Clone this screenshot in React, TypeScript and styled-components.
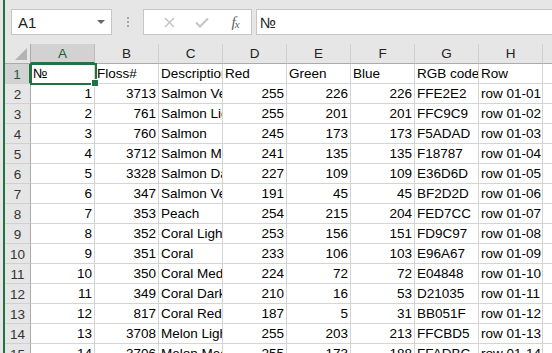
import React from 'react';
import styled, { createGlobalStyle } from 'styled-components';

const GlobalStyle = createGlobalStyle`
    html, body {
        margin: 0;
        padding: 0;
        width: 552px;
        height: 353px;
        overflow: hidden;
        background: #e6e6e6;
    }
    * {
        box-sizing: border-box;
    }
`;

const XL_GREEN = '#217346';

const Page = styled.div`
    width: 552px;
    height: 353px;
    padding-left: 3px;
    background: #e6e6e6;
    overflow: hidden;
`;

const Window = styled.div`
    height: 100%;
    border-left: 2px solid ${XL_GREEN};
    display: flex;
    flex-direction: column;
    background: #e6e6e6;
`;

const FormulaBar = styled.div`
    height: 44px;
    flex: none;
    display: flex;
    align-items: flex-start;
    padding: 9px 0 0 6px;
    font-family: 'Liberation Sans', Arial, sans-serif;
`;

const NameBox = styled.div`
    width: 101px;
    height: 26px;
    background: #fff;
    border: 1px solid #c6c6c6;
    display: flex;
    align-items: center;
    justify-content: space-between;
    padding: 0 6px 0 6px;
    font-size: 15px;
    color: #222;
`;

const DropArrow = styled.span`
    width: 0;
    height: 0;
    border-left: 4px solid transparent;
    border-right: 4px solid transparent;
    border-top: 4px solid #666;
`;

const Dots = styled.div`
    width: 31px;
    height: 26px;
    display: flex;
    flex-direction: column;
    align-items: center;
    justify-content: center;
    gap: 2px;
    span {
        width: 2px;
        height: 2px;
        background: #a6a6a6;
    }
`;

const FuncButtons = styled.div`
    width: 109px;
    height: 26px;
    background: #fff;
    border: 1px solid #c6c6c6;
    display: flex;
    align-items: center;
    padding-left: 10px;
`;

const FuncButton = styled.div<{ $w: number }>`
    width: ${p => p.$w}px;
    height: 24px;
    display: flex;
    align-items: center;
    justify-content: center;
`;

const FxLabel = styled.span`
    font-family: 'Liberation Serif', 'Times New Roman', serif;
    font-style: italic;
    font-size: 15px;
    color: #5b5b5b;
    letter-spacing: -1px;
    sub {
        font-size: 11px;
        vertical-align: -1px;
    }
`;

const FormulaInput = styled.div`
    flex: 1;
    height: 26px;
    margin-left: 4px;
    background: #fff;
    border: 1px solid #c6c6c6;
    border-right: none;
    display: flex;
    align-items: center;
    padding-left: 3px;
    font-size: 15px;
    color: #222;
`;

const SheetWrap = styled.div`
    position: relative;
    flex: 1;
    overflow: hidden;
    background: #fff;
`;

const Sheet = styled.div`
    display: grid;
    grid-template-columns: 26px repeat(9, 64px);
    grid-auto-rows: 20px;
    font-family: 'Liberation Sans', Arial, sans-serif;
    font-size: 13.5px;
    color: #000;
`;

const Corner = styled.div`
    position: relative;
    background: #e6e6e6;
    border-right: 1px solid #ababab;
    border-bottom: 1px solid #ababab;
    &::after {
        content: '';
        position: absolute;
        right: 3px;
        bottom: 3px;
        width: 0;
        height: 0;
        border-left: 12px solid transparent;
        border-bottom: 12px solid #b4b4b4;
    }
`;

const ColHead = styled.div<{ $active?: boolean }>`
    background: ${p => (p.$active ? '#d2d2d2' : '#e6e6e6')};
    border-right: 1px solid ${p => (p.$active ? '#bcbcbc' : '#d0d0d0')};
    border-bottom: ${p => (p.$active ? `2px solid ${XL_GREEN}` : '1px solid #ababab')};
    display: flex;
    align-items: center;
    justify-content: center;
    padding-top: ${p => (p.$active ? '1px' : '0')};
    color: ${p => (p.$active ? '#1d5c38' : '#222')};
`;

const RowHead = styled.div<{ $active?: boolean }>`
    background: ${p => (p.$active ? '#d2d2d2' : '#e6e6e6')};
    border-right: ${p => (p.$active ? `2px solid ${XL_GREEN}` : '1px solid #ababab')};
    border-bottom: 1px solid #d0d0d0;
    display: flex;
    align-items: center;
    justify-content: center;
    padding-top: 1px;
    color: ${p => (p.$active ? '#1d5c38' : '#333')};
`;

const Cell = styled.div<{ $num?: boolean }>`
    border-right: 1px solid #d4d4d4;
    border-bottom: 1px solid #d4d4d4;
    display: flex;
    align-items: flex-end;
    justify-content: ${p => (p.$num ? 'flex-end' : 'flex-start')};
    padding: 0 2px 1px 2px;
    white-space: nowrap;
    overflow: hidden;
    line-height: 16px;
`;

const Selection = styled.div`
    position: absolute;
    left: 25px;
    top: 19px;
    width: 67px;
    height: 22px;
    border: 2px solid ${XL_GREEN};
    pointer-events: none;
    &::after {
        content: '';
        position: absolute;
        right: -4px;
        bottom: -4px;
        width: 6px;
        height: 6px;
        background: ${XL_GREEN};
        border: 1px solid #fff;
    }
`;

const columns = ['A', 'B', 'C', 'D', 'E', 'F', 'G', 'H', 'I'];

// numeric columns are right aligned like Excel does
const numericCols = [true, true, false, true, true, true, false, false];

const header = ['№', 'Floss#', 'Description', 'Red', 'Green', 'Blue', 'RGB code', 'Row'];

const rows: (string | number)[][] = [
    [1, 3713, 'Salmon Very Light', 255, 226, 226, 'FFE2E2', 'row 01-01'],
    [2, 761, 'Salmon Light', 255, 201, 201, 'FFC9C9', 'row 01-02'],
    [3, 760, 'Salmon', 245, 173, 173, 'F5ADAD', 'row 01-03'],
    [4, 3712, 'Salmon Medium', 241, 135, 135, 'F18787', 'row 01-04'],
    [5, 3328, 'Salmon Dark', 227, 109, 109, 'E36D6D', 'row 01-05'],
    [6, 347, 'Salmon Very Dark', 191, 45, 45, 'BF2D2D', 'row 01-06'],
    [7, 353, 'Peach', 254, 215, 204, 'FED7CC', 'row 01-07'],
    [8, 352, 'Coral Light', 253, 156, 151, 'FD9C97', 'row 01-08'],
    [9, 351, 'Coral', 233, 106, 103, 'E96A67', 'row 01-09'],
    [10, 350, 'Coral Medium', 224, 72, 72, 'E04848', 'row 01-10'],
    [11, 349, 'Coral Dark', 210, 16, 53, 'D21035', 'row 01-11'],
    [12, 817, 'Coral Red Very Dark', 187, 5, 31, 'BB051F', 'row 01-12'],
    [13, 3708, 'Melon Light', 255, 203, 213, 'FFCBD5', 'row 01-13'],
    [14, 3706, 'Melon Medium', 255, 173, 188, 'FFADBC', 'row 01-14'],
    [15, 3705, 'Melon Dark', 255, 146, 146, 'FF9292', 'row 01-15'],
];

const App = () => {
    return (
        <Page>
            <GlobalStyle />
            <Window>
                <FormulaBar>
                    <NameBox>
                        <span>A1</span>
                        <DropArrow />
                    </NameBox>
                    <Dots>
                        <span />
                        <span />
                        <span />
                    </Dots>
                    <FuncButtons>
                        <FuncButton $w={30}>
                            <svg width="11" height="11" viewBox="0 0 11 11">
                                <path d="M1 1 L10 10 M10 1 L1 10" stroke="#c4c4c4" strokeWidth="1.5" fill="none" />
                            </svg>
                        </FuncButton>
                        <FuncButton $w={36}>
                            <svg width="14" height="11" viewBox="0 0 14 11">
                                <path d="M1 5.5 L5 9.5 L13 1.5" stroke="#c4c4c4" strokeWidth="2" fill="none" />
                            </svg>
                        </FuncButton>
                        <FuncButton $w={30}>
                            <FxLabel>
                                f<sub>x</sub>
                            </FxLabel>
                        </FuncButton>
                    </FuncButtons>
                    <FormulaInput>№</FormulaInput>
                </FormulaBar>
                <SheetWrap>
                    <Sheet>
                        <Corner />
                        {columns.map((c, i) => (
                            <ColHead key={c} $active={i === 0}>
                                {c}
                            </ColHead>
                        ))}
                        <RowHead $active>1</RowHead>
                        {header.map((h, i) => (
                            <Cell key={'h' + i}>{h}</Cell>
                        ))}
                        <Cell />
                        {rows.map((r, ri) => (
                            <React.Fragment key={ri}>
                                <RowHead>{ri + 2}</RowHead>
                                {r.map((v, ci) => (
                                    <Cell key={ci} $num={numericCols[ci]}>
                                        {v}
                                    </Cell>
                                ))}
                                <Cell />
                            </React.Fragment>
                        ))}
                    </Sheet>
                    <Selection />
                </SheetWrap>
            </Window>
        </Page>
    );
};

export default App;
